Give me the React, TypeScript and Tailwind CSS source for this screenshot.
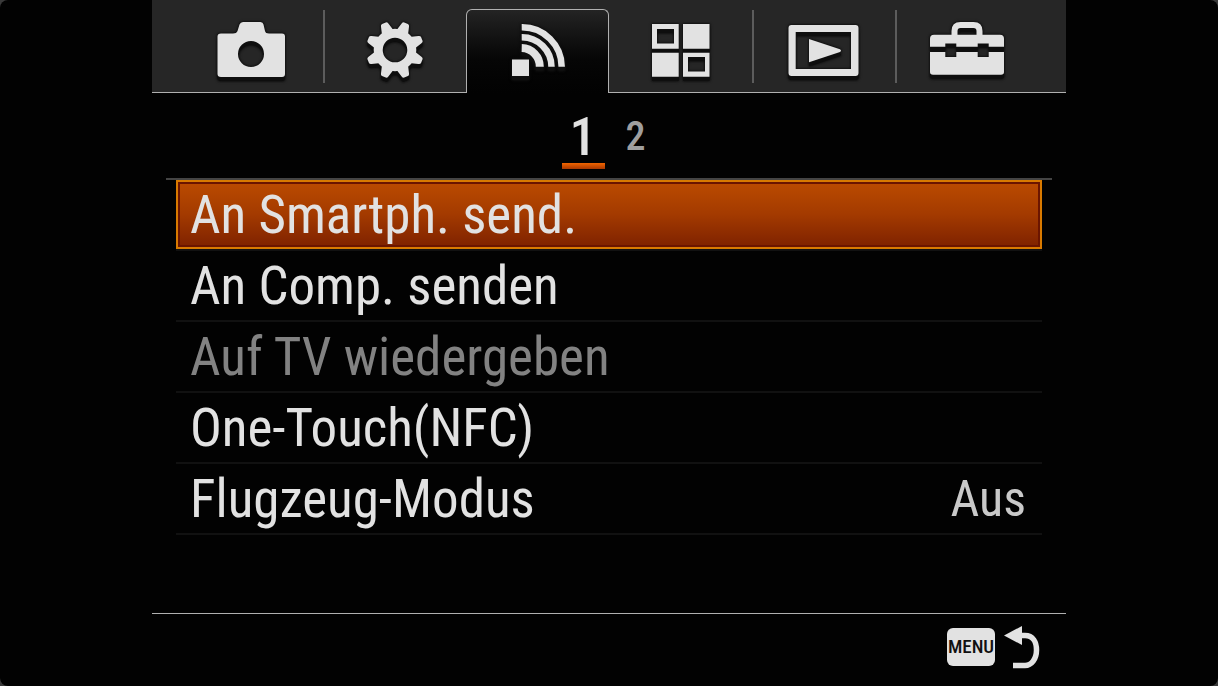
import type { ReactNode } from "react";

const LIGHT = "#e2e2e2";

function Icon({ children }: { children: ReactNode }) {
  return (
    <svg
      viewBox="0 0 81 68"
      width="81"
      height="68"
      aria-hidden="true"
      className="shrink-0 overflow-visible [filter:drop-shadow(0_4px_0_#0e0e0e)_drop-shadow(0_0_1px_#0e0e0e)_drop-shadow(0_0_1px_#0e0e0e)]"
    >
      <g fill={LIGHT}>{children}</g>
    </svg>
  );
}

function CameraIcon() {
  return (
    <Icon>
      <path
        fillRule="evenodd"
        d="M10 19.5H22Q25.500 19.500 26.500 17L28.500 10.500Q29.500 8 32 8H49.500Q52 8 52.500 10.500L54 17Q54.500 19.500 58 19.500H71Q74 19.500 74 22.500V60Q74 63 71 63H10Q6.500 63 6.500 60V22.500Q6.500 19.500 10 19.500ZM40 27a13 13 0 1 0 0 26a13 13 0 1 0 0-26Z"
      />
    </Icon>
  );
}

const TEETH = [22.5, 67.5, 112.5, 157.5, 202.5, 247.5, 292.5, 337.5];

function GearIcon() {
  return (
    <Icon>
      <g transform="translate(41 36)">
        <circle r="16.800" fill="none" stroke={LIGHT} strokeWidth="9" />
        {TEETH.map((angle) => (
          <path
            key={angle}
            transform={`rotate(${angle})`}
            d="M-6.500 -18L-4 -27Q-3.500 -29 -2 -29H2Q3.500 -29 4 -27L6.500 -18Z"
          />
        ))}
      </g>
    </Icon>
  );
}

function WirelessIcon() {
  return (
    <Icon>
      <rect x="15" y="45.500" width="17" height="16.500" />
      <g fill="none" stroke={LIGHT}>
        <path d="M24.700 13.300A39.600 39.600 0 0 1 64.700 52.800" strokeWidth="6.500" />
        <path d="M24.700 23.300A29.600 29.600 0 0 1 54.500 52.800" strokeWidth="6.500" />
        <path d="M24.700 34A18.500 18.500 0 0 1 42.800 52.800" strokeWidth="8" />
      </g>
    </Icon>
  );
}

function AppsIcon() {
  return (
    <Icon>
      <path
        fillRule="evenodd"
        d="M12 10H38.700V34.700H12ZM17 15V29.500H34V15ZM43 10H69.500V34.700H43ZM12 38.700H38.700V62.700H12ZM43 38.700H69.500V62.700H43ZM48 43V57.500H65V43Z"
      />
    </Icon>
  );
}

function PlaybackIcon() {
  return (
    <Icon>
      <path
        fillRule="evenodd"
        d="M8.500 11H72.500Q75.500 11 75.500 14V59Q75.500 62 72.500 62H8.500Q5.500 62 5.500 59V14Q5.500 11 8.500 11ZM12.700 18V55H68V18Z"
      />
      <path d="M26 25L57 35.300Q59 36.700 57 38L26 48.300Z" />
    </Icon>
  );
}

function ToolboxIcon() {
  return (
    <Icon>
      <path
        d="M28.500 22V17Q28.500 11 34.500 11H47.500Q53.500 11 53.500 17V22"
        fill="none"
        stroke={LIGHT}
        strokeWidth="6"
      />
      <path d="M8 20.700H74Q78 20.700 78 24.700V32.700H62.700V29.500H51.700V32.700H30.300V29.500H19.300V32.700H4V24.700Q4 20.700 8 20.700Z" />
      <path d="M4 38H19.300V43H30.300V38H51.700V43H62.700V38H78V58Q78 60.700 75 60.700H7Q4 60.700 4 58Z" />
    </Icon>
  );
}

const TABS = [
  { label: "Kamera", icon: <CameraIcon />, divider: true },
  { label: "Benutzereinstellungen", icon: <GearIcon />, divider: false },
  { label: "Drahtlos", icon: <WirelessIcon />, active: true },
  { label: "Applikation", icon: <AppsIcon />, divider: true },
  { label: "Wiedergabe", icon: <PlaybackIcon />, divider: true },
  { label: "Setup", icon: <ToolboxIcon />, divider: false },
];

const ITEMS = [
  { label: "An Smartph. send.", selected: true },
  { label: "An Comp. senden" },
  { label: "Auf TV wiedergeben", disabled: true },
  { label: "One-Touch(NFC)" },
  { label: "Flugzeug-Modus", value: "Aus" },
];

export default function App() {
  return (
    <div className="min-h-screen bg-[#3a3a3a] font-['Roboto_Condensed','Liberation_Sans_Narrow','Liberation_Sans',sans-serif] text-[#e2e2e2]">
      <div className="flex min-h-screen flex-col rounded-lg bg-[#020202]">
        <main className="mx-auto flex w-full max-w-[914px] grow flex-col">
          <nav className="grid h-[93px] grid-cols-6 border-b border-[#b0b0b0] bg-[#262626] px-7">
            {TABS.map((tab) =>
              tab.active ? (
                <button
                  key={tab.label}
                  aria-label={tab.label}
                  aria-current="page"
                  className="-mb-px mt-[9px] flex justify-center rounded-t-md border-x border-t border-[#b0b0b0] bg-linear-to-b from-[#242424] via-[#060606] via-60% to-[#020202] pt-1"
                >
                  {tab.icon}
                </button>
              ) : (
                <button key={tab.label} aria-label={tab.label} className="flex pt-2.5">
                  <span className="flex h-[73px] grow justify-center pt-1">{tab.icon}</span>
                  {tab.divider && <span className="-mr-0.5 h-[73px] w-0.5 bg-[#5c5c5c]" />}
                </button>
              ),
            )}
          </nav>

          <div className="mx-3.5 flex h-[87px] justify-center gap-3 border-b-2 border-[#444] pt-[17px] pr-0.5">
            <button
              aria-current="true"
              className="flex h-[59px] w-[43px] flex-col items-center justify-between text-[54px] leading-[53px] font-medium"
            >
              1
              <span className="h-[6px] w-full shrink-0 bg-linear-to-b from-[#f26500] to-[#a83800]" />
            </button>
            <button className="h-[53px] w-[38px] text-[40px] leading-[53px] font-medium text-[#9f9f9f]">2</button>
          </div>

          <ul className="mx-6">
            {ITEMS.map((item) => (
              <li key={item.label} className="h-[71px] border-b-2 border-[#111]">
                <button
                  disabled={item.disabled}
                  className={
                    "flex h-[69px] w-full items-center justify-between pr-4 pl-3.5 text-[53px] leading-[68px] whitespace-nowrap " +
                    (item.selected
                      ? "bg-linear-to-b from-[#bd4c00] via-[#a33a00] to-[#7c2000] [box-shadow:inset_0_0_0_2px_#d97a00,inset_0_0_0_4px_#6b1500]"
                      : item.disabled
                        ? "text-[#828282]"
                        : "")
                  }
                >
                  <span>{item.label}</span>
                  {item.value && <span className="text-[50px] text-[#c9c9c9]">{item.value}</span>}
                </button>
              </li>
            ))}
          </ul>

          <footer className="mt-auto flex h-[73px] items-start justify-end border-t border-[#b0b0b0] pt-3 pr-[26px]">
            <button aria-label="MENU zurück" className="flex gap-2">
              <span className="mt-0.5 flex h-[38px] w-12 items-center justify-center rounded-md bg-[#e2e2e2] text-[19px] leading-[38px] font-medium text-[#111]">
                MENU
              </span>
              <svg viewBox="0 0 37 44" width="37" height="44" aria-hidden="true">
                <path d="M1 9.500L19 0V19Z" fill={LIGHT} />
                <path d="M18 9.500H22C30 9.500 33.500 16 33.500 24C33.500 33 28.500 39.500 22 39.500H10" fill="none" stroke={LIGHT} strokeWidth="5.500" />
              </svg>
            </button>
          </footer>
        </main>
      </div>
    </div>
  );
}
